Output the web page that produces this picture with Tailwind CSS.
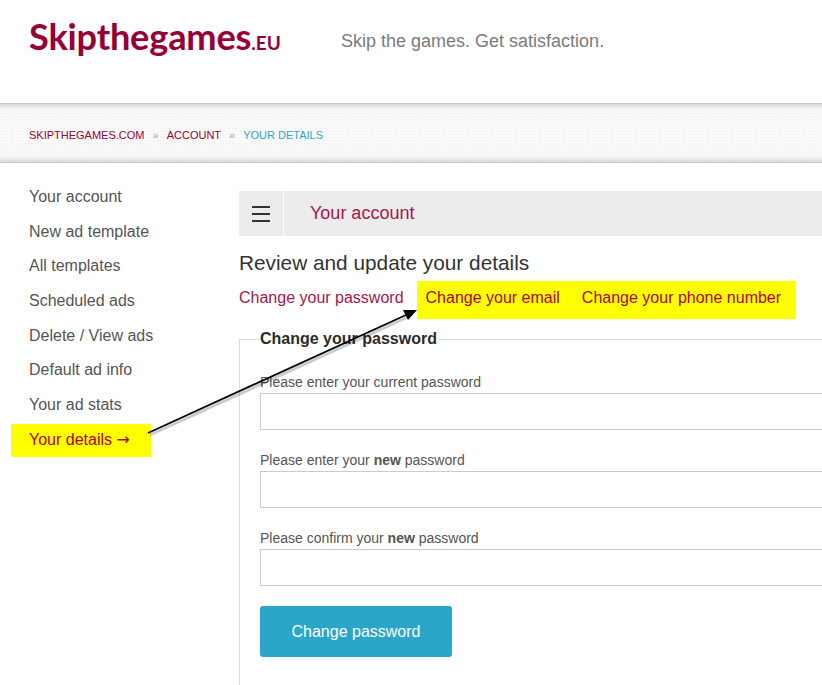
<!DOCTYPE html>
<html>
<head>
<meta charset="utf-8">
<script src="https://cdn.jsdelivr.net/npm/@tailwindcss/browser@4"></script>
</head>
<body class="bg-white overflow-hidden font-['Liberation_Sans',Arial,sans-serif]">
<div class="relative w-[822px] h-[685px] overflow-hidden">
  <header class="h-[103px] flex items-start pl-[29px]">
    <div class="flex items-baseline mt-[14px] w-[312px] font-['Lato',sans-serif] text-[#970037]">
      <span class="text-[36.2px] leading-[44px] font-bold tracking-[-0.2px]">Skipthegames</span><span class="text-[19px] font-bold leading-none">.EU</span>
    </div>
    <p class="mt-[31px] text-[18px] leading-[20px] text-[#7b7b7b]">Skip the games. Get satisfaction.</p>
  </header>

  <nav class="h-[60px] flex items-center gap-[8px] pl-[29px] pt-[4px] text-[11px] bg-[#fafafa] bg-[radial-gradient(#f1eef0_0.6px,transparent_0.7px),linear-gradient(to_bottom,#c4c4c4_0px,#e6e6e6_3px,#f8f8f8_7px,#fbfbfb_50%,#f8f8f8_calc(100%-7px),#e6e6e6_calc(100%-3px),#c4c4c4_100%)] bg-size-[3px_3px,100%_100%]">
    <span class="text-[#970037]">SKIPTHEGAMES.COM</span>
    <span class="text-[#b0a0a8]">»</span>
    <span class="text-[#970037]">ACCOUNT</span>
    <span class="text-[#b0a0a8]">»</span>
    <span class="text-[#2ba6cb]">YOUR DETAILS</span>
  </nav>

  <div class="flex">
    <aside class="w-[239px] shrink-0 pl-[29px] pt-[16px] text-[16px] text-[#555]">
      <ul class="flex flex-col">
        <li class="h-[34.7px] leading-[36px]">Your account</li>
        <li class="h-[34.7px] leading-[36px]">New ad template</li>
        <li class="h-[34.7px] leading-[36px]">All templates</li>
        <li class="h-[34.7px] leading-[36px]">Scheduled ads</li>
        <li class="h-[34.7px] leading-[36px]">Delete / View ads</li>
        <li class="h-[34.7px] leading-[36px]">Default ad info</li>
        <li class="h-[34.7px] leading-[36px]">Your ad stats</li>
        <li class="h-[34.7px] leading-[36px] relative"><span class="absolute -left-[18px] top-[2px] w-[140px] h-[33px] bg-[#ffff00]"></span><span class="relative text-[#b0002a]">Your details <span class="font-['DejaVu_Sans',sans-serif]">→</span></span></li>
      </ul>
    </aside>

    <main class="flex-1 min-w-0 pt-[28px]">
      <div class="h-[45px] flex items-stretch bg-[#ececec]">
        <div class="w-[45px] flex items-center justify-center border-r border-white">
          <svg width="18" height="16" viewBox="0 0 18 16"><path d="M0 1h18M0 8h18M0 15h18" stroke="#333" stroke-width="2"/></svg>
        </div>
        <div class="pl-[26px] flex items-center text-[18px] text-[#a5174a]">Your account</div>
      </div>
      <h1 class="mt-[14px] text-[20.8px] leading-[26px] text-[#333]">Review and update your details</h1>
      <div class="relative mt-[7px] h-[30px] flex items-center text-[16px] text-[#a5174a]">
        <span class="absolute left-[178px] -top-[2px] w-[379px] h-[38px] bg-[#ffff00]"></span>
        <span class="relative">Change your password</span>
        <span class="relative ml-[22px] text-[#b0002a]">Change your email</span>
        <span class="relative ml-[22px] text-[#b0002a]">Change your phone number</span>
      </div>
      <fieldset class="mt-[17px] -mr-[20px] border border-[#dcdcdc] pl-[20px] h-[400px]">
        <legend class="text-[16px] font-bold text-[#2b2b2b] px-0 pr-[2px] leading-[18px]">Change your password</legend>
        <label class="block mt-[26px] text-[14px] leading-[16px] text-[#555]">Please enter your current password</label>
        <div class="mt-[3px] h-[37px] border border-[#ccc]"></div>
        <label class="block mt-[22px] text-[14px] leading-[16px] text-[#555]">Please enter your <b class="font-bold">new</b> password</label>
        <div class="mt-[3px] h-[37px] border border-[#ccc]"></div>
        <label class="block mt-[22px] text-[14px] leading-[16px] text-[#555]">Please confirm your <b class="font-bold">new</b> password</label>
        <div class="mt-[3px] h-[37px] border border-[#ccc]"></div>
        <button class="mt-[20px] w-[192px] h-[51px] rounded-[3px] bg-[#2ba6cb] text-white text-[16px]">Change password</button>
      </fieldset>
    </main>
  </div>

  <svg class="absolute left-0 top-0 pointer-events-none" width="822" height="685" viewBox="0 0 822 685">
    <line x1="150" y1="435" x2="408" y2="317" stroke="#000" stroke-opacity="0.2" stroke-width="3"/>
    <line x1="148" y1="433" x2="406" y2="315" stroke="#000" stroke-width="1.8"/>
    <polygon points="417,310 403,310 408,320" fill="#000"/>
  </svg>
</div>
</body>
</html>
